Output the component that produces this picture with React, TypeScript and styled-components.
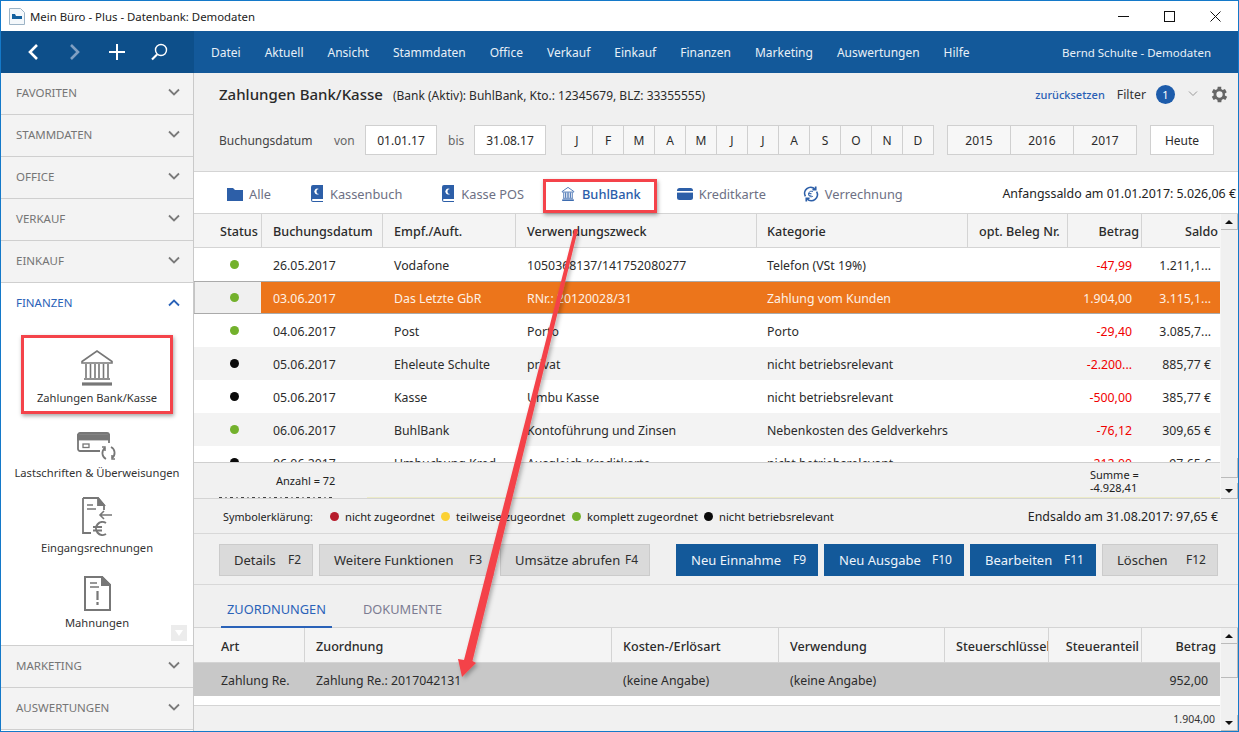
import React from 'react';
import styled, { createGlobalStyle } from 'styled-components';

const GlobalStyle = createGlobalStyle`
	html, body {
		margin: 0;
		padding: 0;
		background: #fff;
	}
	* {
		box-sizing: border-box;
	}
`;

const Window = styled.div`
	position: relative;
	width: 1239px;
	height: 732px;
	display: flex;
	flex-direction: column;
	overflow: hidden;
	border: 1px solid #1479c9;
	background: #fff;
	font-family: 'Noto Sans', 'Open Sans', sans-serif;
	font-size: 12.3px;
	color: #2b2b2b;
`;

const TitleBar = styled.div`
	height: 30px;
	flex: none;
	display: flex;
	align-items: center;
	padding-left: 8px;
	color: #222;
	font-size: 11.4px;
`;

const TitleText = styled.span`
	margin-left: 5px;
	flex: 1;
`;

const WindowControls = styled.div`
	display: flex;
	align-items: center;
	height: 100%;
`;

const WindowControl = styled.div`
	width: 46px;
	height: 100%;
	display: flex;
	align-items: center;
	justify-content: center;
`;

const NavBar = styled.div`
	height: 42px;
	flex: none;
	display: flex;
	background: #13599a;
	color: #e8f0f7;
`;

const NavTools = styled.div`
	width: 193px;
	flex: none;
	display: flex;
	align-items: center;
	padding-left: 23px;
	gap: 24px;
	background: #0d4f8a;
`;

const NavMenu = styled.nav`
	display: flex;
	align-items: center;
	gap: 24px;
	padding-left: 17px;
	flex: 1;
	font-size: 12px;
`;

const NavUser = styled.div`
	display: flex;
	align-items: center;
	padding-right: 27px;
	font-size: 11.5px;
`;

const Body = styled.div`
	flex: 1;
	display: flex;
	min-height: 0;
`;

const Sidebar = styled.aside`
	width: 193px;
	flex: none;
	display: flex;
	flex-direction: column;
	border-right: 1px solid #c9c9c9;
	background: #fff;
`;

const SectionHead = styled.div<{ $open?: boolean }>`
	height: 42px;
	flex: none;
	display: flex;
	align-items: center;
	justify-content: space-between;
	padding: 0 13px 3px 15px;
	background: ${(p) => (p.$open ? '#fff' : '#f3f3f3')};
	border-bottom: ${(p) => (p.$open ? 'none' : '1px solid #cfcfcf')};
	color: ${(p) => (p.$open ? '#2a62b8' : '#757575')};
	font-size: 11.5px;
`;

const SectionBody = styled.div`
	position: relative;
	height: 321px;
	flex: none;
	display: flex;
	flex-direction: column;
	align-items: center;
	padding-top: 8px;
	border-bottom: 1px solid #cfcfcf;
`;

const SideItem = styled.div`
	height: 75px;
	flex: none;
	display: flex;
	flex-direction: column;
	align-items: center;
	justify-content: flex-end;
	font-size: 11.2px;
	line-height: 15px;
	color: #333;
	white-space: nowrap;
	padding-bottom: 3px;
	gap: 4px;
`;

const CollapseTab = styled.div`
	position: absolute;
	right: 6px;
	bottom: 4px;
	width: 16px;
	height: 16px;
	background: #ececec;
	display: flex;
	align-items: center;
	justify-content: center;
`;

const Main = styled.main`
	flex: 1;
	min-width: 0;
	display: flex;
	flex-direction: column;
	background: #f0f0f0;
`;

const PageHead = styled.div`
	height: 99px;
	flex: none;
	display: flex;
	flex-direction: column;
	border-bottom: 1px solid #d4d4d4;
`;

const TitleRow = styled.div`
	height: 52px;
	flex: none;
	display: flex;
	align-items: center;
	padding: 0 10px 10px 25px;
`;

const PageTitle = styled.h1`
	margin: 0;
	font-size: 15px;
	font-weight: 500;
	color: #2a2a2a;
`;

const PageSub = styled.span`
	margin-left: 10px;
	margin-top: 2px;
	font-size: 12px;
	flex: 1;
`;

const ResetLink = styled.a`
	color: #2a5fb5;
	font-size: 11px;
	font-weight: 500;
`;

const FilterLabel = styled.span`
	margin-left: 12px;
	font-size: 12.3px;
	color: #333;
`;

const FilterBadge = styled.span`
	margin-left: 10px;
	width: 19px;
	height: 19px;
	border-radius: 50%;
	background: #1d5cab;
	color: #fff;
	font-size: 11px;
	display: flex;
	align-items: center;
	justify-content: center;
`;

const FilterCaret = styled.svg`
	margin: 0 6px 0 6px;
`;

const DateRow = styled.div`
	display: flex;
	align-items: center;
	padding-left: 25px;
	height: 30px;
`;

const DateLabel = styled.span<{ $w: number; $c?: string; $pl?: number }>`
	width: ${(p) => p.$w}px;
	flex: none;
	padding-left: ${(p) => p.$pl ?? 0}px;
	color: ${(p) => p.$c || '#444'};
	font-size: 12px;
`;

const DateInput = styled.div`
	width: 72px;
	height: 30px;
	flex: none;
	display: flex;
	align-items: center;
	justify-content: center;
	background: #fff;
	border: 1px solid #d0d0d0;
	font-size: 12px;
`;

const CellGroup = styled.div<{ $ml: number }>`
	display: flex;
	margin-left: ${(p) => p.$ml}px;
`;

const GroupCell = styled.div<{ $w: number; $white?: boolean }>`
	width: ${(p) => p.$w}px;
	height: 30px;
	display: flex;
	align-items: center;
	justify-content: center;
	background: ${(p) => (p.$white ? '#fff' : '#f7f7f7')};
	border: 1px solid #d0d0d0;
	margin-left: -1px;
	font-size: 12px;
`;

const TabBar = styled.div`
	height: 42px;
	flex: none;
	display: flex;
	align-items: center;
	gap: 38px;
	padding: 2px 0 0 33px;
	background: #fff;
	border-bottom: 1px solid #d4d4d4;
`;

const Tab = styled.div<{ $active?: boolean; $nudge: number }>`
	display: flex;
	align-items: center;
	gap: 6px;
	margin-left: ${(p) => p.$nudge}px;
	font-size: 12.8px;
	color: ${(p) => (p.$active ? '#2a5caa' : '#6d7084')};
	font-weight: ${(p) => (p.$active ? 500 : 400)};
`;

const OpeningBalance = styled.div`
	margin-left: auto;
	padding-right: 2px;
	font-size: 12.4px;
	color: #222;
`;

const GridArea = styled.div<{ $grow?: boolean }>`
	display: flex;
	flex: ${(p) => (p.$grow ? 1 : 'none')};
	min-height: 0;
`;

const GridColumn = styled.div`
	width: 1026px;
	flex: none;
	display: flex;
	flex-direction: column;
`;

const tableColumns = '67px 121px 133px 241px 211px 100px 74px 79px';
const subColumns = '110px 307px 167px 166px 104px 93px 79px';

const HeaderRow = styled.div<{ $cols: string; $h: number; $top: number }>`
	display: grid;
	grid-template-columns: ${(p) => p.$cols};
	height: ${(p) => p.$h}px;
	flex: none;
	background: #f4f4f4;
	border-bottom: 1px solid #d4d4d4;

	& > div {
		padding-top: ${(p) => p.$top}px;
	}
`;

const HeaderCell = styled.div<{ $pr?: number; $pad?: number }>`
	display: flex;
	align-items: center;
	justify-content: ${(p) => (p.$pr !== undefined ? 'flex-end' : 'flex-start')};
	padding-left: ${(p) => p.$pad ?? 11}px;
	padding-right: ${(p) => p.$pr ?? 0}px;
	border-left: 1px solid #d4d4d4;
	font-size: 12.6px;
	font-weight: 500;
	color: #2b2b2b;
	white-space: nowrap;
	overflow: hidden;

	&:first-child {
		border-left: none;
	}
`;

const TableBody = styled.div`
	height: 214px;
	flex: none;
	overflow: hidden;
	background: #fff;
`;

const Row = styled.div<{ $cols: string; $tone: 'white' | 'grey' | 'active' }>`
	display: grid;
	grid-template-columns: ${(p) => p.$cols};
	height: 33px;
	background: ${(p) => (p.$tone === 'grey' ? '#f3f3f3' : '#fff')};
	box-shadow: ${(p) =>
		p.$tone === 'active' ? 'inset 0 1px #aaa, inset 0 -1px #aaa' : 'none'};
`;

const StatusCell = styled.div<{ $active?: boolean }>`
	display: flex;
	align-items: center;
	justify-content: center;
	padding-left: 13px;
	margin: ${(p) => (p.$active ? '1px 0' : '0')};
	background: ${(p) => (p.$active ? '#f0f0f0' : 'transparent')};
	border: ${(p) => (p.$active ? '1px solid #c4c4c4' : 'none')};
	border-width: 0 0 0 1px;
`;

const Dot = styled.span<{ $color: string }>`
	display: inline-block;
	width: 9px;
	height: 9px;
	flex: none;
	border-radius: 50%;
	background: ${(p) => p.$color};
`;

const Cell = styled.div<{ $pr?: number; $pl?: number; $red?: boolean; $active?: boolean }>`
	display: flex;
	align-items: center;
	justify-content: ${(p) => (p.$pr !== undefined ? 'flex-end' : 'flex-start')};
	padding-left: ${(p) => (p.$pr !== undefined ? 0 : p.$pl ?? 12)}px;
	padding-right: ${(p) => p.$pr ?? 0}px;
	padding-top: 1px;
	white-space: nowrap;
	overflow: hidden;
	background: ${(p) => (p.$active ? '#ec751b' : 'transparent')};
	margin: ${(p) => (p.$active ? '1px 0' : '0')};
	color: ${(p) => (p.$active ? '#fdf1e6' : p.$red ? '#f00000' : '#2b2b2b')};
`;

const SummaryBar = styled.div`
	height: 37px;
	flex: none;
	display: flex;
	flex-direction: column;
	background: #f1f1f1;
	border-top: 1px solid #cfcfcf;
	border-bottom: 1px solid #d4d4d4;
	font-size: 11px;
	color: #222;
`;

const SummaryContent = styled.div`
	flex: 1;
	display: grid;
	grid-template-columns: 896px 130px;
`;

const SummaryCount = styled.div`
	padding-left: 82px;
	display: flex;
	align-items: center;
`;

const SummaryTotal = styled.div`
	display: flex;
	flex-direction: column;
	justify-content: center;
	line-height: 13px;
	white-space: nowrap;
	padding-top: 2px;
`;

const SummaryEdge = styled.div`
	height: 1px;
	flex: none;
	display: flex;
	padding-left: 25px;
`;

const ClippedText = styled.div`
	width: 113px;
	background: repeating-linear-gradient(to right, #444 0 3px, transparent 3px 6px, #888 6px 8px, transparent 8px 11px);
`;

const YellowLine = styled.div`
	flex: 1;
	margin-left: 35px;
	background: #ecebc8;
`;

const Scrollbar = styled.div`
	width: 18px;
	flex: none;
	display: flex;
	flex-direction: column;
	background: #f0f0f0;
	border-left: 1px solid #f6f6f6;
`;

const ScrollButton = styled.div`
	height: 16px;
	flex: none;
	display: flex;
	align-items: center;
	justify-content: center;
	background: #f0f0f0;
	border-right: 1px solid #bbb;
	border-bottom: 1px solid #bbb;
`;

const ScrollTrack = styled.div`
	flex: 1;
	display: flex;
	flex-direction: column;
`;

const ScrollThumb = styled.div<{ $h: number; $mt: number }>`
	height: ${(p) => p.$h}px;
	margin-top: ${(p) => p.$mt}px;
	flex: none;
	background: #f0f0f0;
	border-right: 1px solid #bbb;
	border-bottom: 1px solid #bbb;
`;

const Arrow = styled.span<{ $up?: boolean }>`
	width: 0;
	height: 0;
	border-left: 4px solid transparent;
	border-right: 4px solid transparent;
	${(p) => (p.$up ? 'border-bottom: 4px solid #111;' : 'border-top: 4px solid #111;')}
`;

const LegendBar = styled.div`
	height: 35px;
	flex: none;
	display: flex;
	align-items: center;
	padding: 0 20px 0 29px;
	border-bottom: 1px solid #d8d8d8;
	font-size: 11.2px;
	color: #222;
`;

const LegendTitle = styled.span`
	width: 107px;
	flex: none;
	font-size: 10.8px;
`;

const LegendItem = styled.span<{ $w: number }>`
	width: ${(p) => p.$w}px;
	flex: none;
	display: flex;
	align-items: center;
	gap: 6px;
	white-space: nowrap;
`;

const LegendEnd = styled.span`
	margin-left: auto;
	font-size: 12.4px;
`;

const ActionBar = styled.div`
	height: 51px;
	flex: none;
	display: flex;
	align-items: center;
	padding: 1px 0 0 25px;
	gap: 6px;
	border-bottom: 1px solid #d8d8d8;
`;

const ActionButton = styled.button<{ $w: number; $primary?: boolean; $ml?: number }>`
	width: ${(p) => p.$w}px;
	height: 32px;
	margin-left: ${(p) => p.$ml ?? 0}px;
	display: flex;
	align-items: center;
	justify-content: space-between;
	padding: 0 11px 0 14px;
	font: inherit;
	font-size: 13px;
	border: 1px solid ${(p) => (p.$primary ? '#13599a' : '#cbcbcb')};
	background: ${(p) => (p.$primary ? '#13599a' : '#dadada')};
	color: ${(p) => (p.$primary ? '#eef4fa' : '#2e2e2e')};
`;

const ButtonKey = styled.span`
	font-size: 12px;
`;

const SubTabs = styled.div`
	height: 43px;
	flex: none;
	display: flex;
	align-items: flex-end;
	padding-left: 27px;
	gap: 25px;
	border-bottom: 1px solid #d4d4d4;
`;

const SubTab = styled.div<{ $active?: boolean }>`
	height: 32px;
	padding: 4px 6px 0;
	font-size: 12.8px;
	color: ${(p) => (p.$active ? '#2a62b8' : '#7c7c92')};
	border-bottom: 2px solid ${(p) => (p.$active ? '#2a62b8' : 'transparent')};
	margin-bottom: -1px;
`;

const SubBody = styled.div`
	height: 43px;
	flex: none;
	background: #fff;
	border-bottom: 1px solid #d4d4d4;
`;

const SubRow = styled.div<{ $cols: string }>`
	display: grid;
	grid-template-columns: ${(p) => p.$cols};
	height: 33px;
	background: #c8c8c8;
`;

const SubFooter = styled.div`
	flex: 1;
	display: flex;
	align-items: center;
	justify-content: flex-end;
	padding: 0 5px 0 0;
	font-size: 10.5px;
	color: #333;
	background: #f1f1f1;
`;

const Highlight = styled.div<{ $x: number; $y: number; $w: number; $h: number }>`
	position: absolute;
	left: ${(p) => p.$x}px;
	top: ${(p) => p.$y}px;
	width: ${(p) => p.$w}px;
	height: ${(p) => p.$h}px;
	border: 3px solid #f4434a;
	box-shadow: 1px 2px 4px rgba(0, 0, 0, 0.35);
	pointer-events: none;
`;

const PointerOverlay = styled.svg`
	position: absolute;
	left: -1px;
	top: -1px;
	pointer-events: none;
`;

const Chevron = ({ up, color = '#7a7a7a' }: { up?: boolean; color?: string }) => (
	<svg width='12' height='8' viewBox='0 0 12 8'>
		<path
			d={up ? 'M1 6.5 6 1.5l5 5' : 'M1 1.5 6 6.5l5-5'}
			fill='none'
			stroke={color}
			strokeWidth='1.8'
		/>
	</svg>
);

const BankIcon = ({ w, h, color, stroke }: { w: number; h: number; color: string; stroke: number }) => (
	<svg width={w} height={h} viewBox='0 0 32 36' fill='none' stroke={color} strokeWidth={stroke}>
		<path d='M1 11.500 16 1l15 10.500v1.500H1z' />
		<path d='M5 14v14M9.500 14v14M14 14v14M18 14v14M22.500 14v14M27 14v14' />
		<path d='M3 29h26' />
		<path d='M1 34h30' strokeWidth={stroke * 2} />
	</svg>
);

const BookIcon = () => (
	<svg width='15' height='17' viewBox='-1 0 15 17'>
		<path d='M1 2a2 2 0 0 1 2-2h10v14H3a1 1 0 0 0 0 2h10v1H3a2 2 0 0 1-2-2z' fill='#2d5fa8' />
		<path d='M9 4a3 3 0 1 0 0 5 2.500 2.500 0 0 1 0-5z' fill='#fff' />
	</svg>
);

const TabIcons: Record<string, React.ReactNode> = {
	Alle: (
		<svg width='16' height='14' viewBox='0 0 16 14'>
			<path d='M0 1h6l2 2h8v11H0z' fill='#2d5fa8' />
		</svg>
	),
	Kassenbuch: <BookIcon />,
	'Kasse POS': <BookIcon />,
	BuhlBank: <BankIcon w={16} h={14} color='#3d6cb0' stroke={2.2} />,
	Kreditkarte: (
		<svg width='16' height='12' viewBox='0 0 16 12'>
			<rect y='0' width='16' height='12' rx='2.500' fill='#2d5fa8' />
			<rect y='3' width='16' height='1.600' fill='#fff' />
		</svg>
	),
	Verrechnung: (
		<svg width='16' height='16' viewBox='0 0 17 17' fill='none' stroke='#2d5fa8' strokeWidth='1.800'>
			<path d='M2.500 11A6.500 6.500 0 0 1 12.500 3M14.500 6a6.500 6.500 0 0 1-10 8' />
			<path d='M13.500 .5v3.500h-3.500M3.500 16.500v-3.500h3.500' />
			<path d='M10.500 6a3 3 0 1 0 0 5M6 8h3M6 9.800h3' strokeWidth='1' />
		</svg>
	),
};

const sections = ['FAVORITEN', 'STAMMDATEN', 'OFFICE', 'VERKAUF', 'EINKAUF'];
const menu = [
	'Datei',
	'Aktuell',
	'Ansicht',
	'Stammdaten',
	'Office',
	'Verkauf',
	'Einkauf',
	'Finanzen',
	'Marketing',
	'Auswertungen',
	'Hilfe',
];
const months = ['J', 'F', 'M', 'A', 'M', 'J', 'J', 'A', 'S', 'O', 'N', 'D'];
const tabs = [
	{ label: 'Alle', nudge: 0 },
	{ label: 'Kassenbuch', nudge: 0 },
	{ label: 'Kasse POS', nudge: 0 },
	{ label: 'BuhlBank', nudge: -2 },
	{ label: 'Kreditkarte', nudge: -2 },
	{ label: 'Verrechnung', nudge: -1 },
];

const GREEN = '#73b12c';
const BLACK = '#0a0a0a';

const rows = [
	{ dot: GREEN, date: '26.05.2017', who: 'Vodafone', why: '1050368137/141752080277', cat: 'Telefon (VSt 19%)', amount: '-47,99', saldo: '1.211,1...' },
	{ dot: GREEN, date: '03.06.2017', who: 'Das Letzte GbR', why: 'RNr.: 20120028/31', cat: 'Zahlung vom Kunden', amount: '1.904,00', saldo: '3.115,1...' },
	{ dot: GREEN, date: '04.06.2017', who: 'Post', why: 'Porto', cat: 'Porto', amount: '-29,40', saldo: '3.085,7...' },
	{ dot: BLACK, date: '05.06.2017', who: 'Eheleute Schulte', why: 'privat', cat: 'nicht betriebsrelevant', amount: '-2.200...', saldo: '885,77 €' },
	{ dot: BLACK, date: '05.06.2017', who: 'Kasse', why: 'Umbu Kasse', cat: 'nicht betriebsrelevant', amount: '-500,00', saldo: '385,77 €' },
	{ dot: GREEN, date: '06.06.2017', who: 'BuhlBank', why: 'Kontoführung und Zinsen', cat: 'Nebenkosten des Geldverkehrs', amount: '-76,12', saldo: '309,65 €' },
	{ dot: BLACK, date: '06.06.2017', who: 'Umbuchung Kred...', why: 'Ausgleich Kreditkarte', cat: 'nicht betriebsrelevant', amount: '-212,00', saldo: '97,65 €' },
];

const toneFor = (index: number): 'white' | 'grey' | 'active' => {
	if (index === 1) return 'active';
	return index === 3 || index === 5 ? 'grey' : 'white';
};

export default function App() {
	return (
		<Window>
			<GlobalStyle />
			<TitleBar>
				<svg width='16' height='17' viewBox='0 0 16 17'>
					<path d='M.5.5h11l4 4v12H.5z' fill='#f4f8fb' stroke='#9db4c6' />
					<path d='M3 6h3l1 2h6v3H3z' fill='#14619f' />
				</svg>
				<TitleText>Mein Büro - Plus - Datenbank: Demodaten</TitleText>
				<WindowControls>
					<WindowControl>
						<svg width='11' height='11' viewBox='0 0 11 11'>
							<path d='M0 5.500h11' stroke='#111' />
						</svg>
					</WindowControl>
					<WindowControl>
						<svg width='11' height='11' viewBox='0 0 11 11'>
							<rect x='.5' y='.5' width='10' height='10' fill='none' stroke='#111' />
						</svg>
					</WindowControl>
					<WindowControl>
						<svg width='11' height='11' viewBox='0 0 11 11'>
							<path d='M.5.5l10 10M10.500.5l-10 10' stroke='#111' />
						</svg>
					</WindowControl>
				</WindowControls>
			</TitleBar>

			<NavBar>
				<NavTools>
					<svg width='18' height='18' viewBox='0 0 18 18'>
						<path d='M13 2 6 9l7 7' fill='none' stroke='#fff' strokeWidth='2.600' />
					</svg>
					<svg width='18' height='18' viewBox='0 0 18 18'>
						<path d='M5 2l7 7-7 7' fill='none' stroke='#7f9fc2' strokeWidth='2.600' />
					</svg>
					<svg width='18' height='18' viewBox='0 0 18 18'>
						<path d='M9 1v16M1 9h16' stroke='#fff' strokeWidth='2' />
					</svg>
					<svg width='18' height='18' viewBox='0 0 18 18' fill='none' stroke='#fff' strokeWidth='1.400'>
						<circle cx='11' cy='7' r='5.500' />
						<path d='M7 11.500 2 16.500' strokeWidth='2.200' />
					</svg>
				</NavTools>
				<NavMenu>
					{menu.map((item) => (
						<span key={item}>{item}</span>
					))}
				</NavMenu>
				<NavUser>Bernd Schulte - Demodaten</NavUser>
			</NavBar>

			<Body>
				<Sidebar>
					{sections.map((section) => (
						<SectionHead key={section}>
							{section}
							<Chevron />
						</SectionHead>
					))}
					<SectionHead $open>
						FINANZEN
						<Chevron up color='#2a62b8' />
					</SectionHead>
					<SectionBody>
						<SideItem>
							<BankIcon w={32} h={36} color='#777' stroke={1.6} />
							Zahlungen Bank/Kasse
						</SideItem>
						<SideItem>
							<svg width='39' height='29' viewBox='0 0 39 29' fill='none' stroke='#777' strokeWidth='1.800'>
								<path d='M23 19H3a2 2 0 0 1-2-2V3a2 2 0 0 1 2-2h27a2 2 0 0 1 2 2v8' />
								<rect x='1' y='3' width='31' height='4.500' fill='#777' />
								<rect x='6' y='12' width='6' height='3.500' strokeWidth='1.300' />
								<path d='M29 27a6.500 6.500 0 0 1-1-11M34 15a6.500 6.500 0 0 1 1 11' />
								<path d='M28 19v-4h-3M35 23v4h3' strokeWidth='1.500' />
							</svg>
							Lastschriften & Überweisungen
						</SideItem>
						<SideItem>
							<svg width='30' height='39' viewBox='0 0 30 39' fill='none' stroke='#777' strokeWidth='1.800'>
								<path d='M1 1h15l6 7v5M1 1v35h8' />
								<path d='M16 1l6 7h-6z' fill='#777' />
								<path d='M5 8h6M5 12h9' strokeWidth='1.400' />
								<path d='M30 18H18M22 14l-4 4 4 4' strokeWidth='1.600' />
								<path d='M24 26a6.500 6.500 0 1 0 0 11M11 30h9M11 33.500h9' strokeWidth='2' />
							</svg>
							Eingangsrechnungen
						</SideItem>
						<SideItem>
							<svg width='27' height='35' viewBox='0 0 27 35' fill='none' stroke='#777' strokeWidth='2'>
								<path d='M1 1h17l8 8v25H1z' />
								<path d='M18 1v8h8z' fill='#777' />
								<path d='M6 7h7M6 11h9' strokeWidth='1.300' />
								<path d='M13.500 15v9M13.500 26v3' strokeWidth='2.200' />
							</svg>
							Mahnungen
						</SideItem>
						<CollapseTab>
							<svg width='8' height='6' viewBox='0 0 8 6'>
								<path d='M0 0h8L4 6z' fill='#fff' />
							</svg>
						</CollapseTab>
					</SectionBody>
					<SectionHead>
						MARKETING
						<Chevron />
					</SectionHead>
					<SectionHead>
						AUSWERTUNGEN
						<Chevron />
					</SectionHead>
				</Sidebar>

				<Main>
					<PageHead>
						<TitleRow>
							<PageTitle>Zahlungen Bank/Kasse</PageTitle>
							<PageSub>(Bank (Aktiv): BuhlBank, Kto.: 12345679, BLZ: 33355555)</PageSub>
							<ResetLink>zurücksetzen</ResetLink>
							<FilterLabel>Filter</FilterLabel>
							<FilterBadge>1</FilterBadge>
							<FilterCaret width='24' height='8' viewBox='0 0 24 8'>
								<path d='M8 1.500l4 4 4-4' fill='none' stroke='#999' />
							</FilterCaret>
							<svg width='17' height='17' viewBox='3.900 2.500 19 19' fill='#666'>
								<path d='M19.400 13a7.600 7.600 0 0 0 0-2l2.100-1.600-2-3.500-2.500 1a7.500 7.500 0 0 0-1.700-1L15.400 3.300h-4l-.4 2.600a7.500 7.500 0 0 0-1.700 1l-2.500-1-2 3.500L6.900 11a7.600 7.600 0 0 0 0 2l-2.100 1.600 2 3.500 2.500-1a7.500 7.500 0 0 0 1.700 1l.4 2.600h4l.4-2.600a7.500 7.500 0 0 0 1.700-1l2.500 1 2-3.500zM13.400 15.500a3.500 3.500 0 1 1 0-7 3.500 3.500 0 0 1 0 7z' />
							</svg>
						</TitleRow>
						<DateRow>
							<DateLabel $w={115}>Buchungsdatum</DateLabel>
							<DateLabel $w={31} $c='#666'>
								von
							</DateLabel>
							<DateInput>01.01.17</DateInput>
							<DateLabel $w={37} $pl={11} $c='#666'>
								bis
							</DateLabel>
							<DateInput>31.08.17</DateInput>
							<CellGroup $ml={16}>
								{months.map((m, i) => (
									<GroupCell key={i} $w={32}>
										{m}
									</GroupCell>
								))}
							</CellGroup>
							<CellGroup $ml={14}>
								{['2015', '2016', '2017'].map((y) => (
									<GroupCell key={y} $w={64}>
										{y}
									</GroupCell>
								))}
							</CellGroup>
							<CellGroup $ml={14}>
								<GroupCell $w={64} $white>
									Heute
								</GroupCell>
							</CellGroup>
						</DateRow>
					</PageHead>

					<TabBar>
						{tabs.map((tab) => (
							<Tab key={tab.label} $active={tab.label === 'BuhlBank'} $nudge={tab.nudge}>
								{TabIcons[tab.label]}
								{tab.label}
							</Tab>
						))}
						<OpeningBalance>Anfangssaldo am 01.01.2017: 5.026,06 €</OpeningBalance>
					</TabBar>

					<GridArea>
						<GridColumn>
							<HeaderRow $cols={tableColumns} $h={34} $top={1}>
								<HeaderCell $pad={26}>Status</HeaderCell>
								<HeaderCell>Buchungsdatum</HeaderCell>
								<HeaderCell>Empf./Auft.</HeaderCell>
								<HeaderCell>Verwendungszweck</HeaderCell>
								<HeaderCell $pad={10}>Kategorie</HeaderCell>
								<HeaderCell>opt. Beleg Nr.</HeaderCell>
								<HeaderCell $pr={2}>Betrag</HeaderCell>
								<HeaderCell $pr={2}>Saldo</HeaderCell>
							</HeaderRow>
							<TableBody>
								{rows.map((row, index) => {
									const tone = toneFor(index);
									const active = tone === 'active';
									return (
										<Row key={index} $cols={tableColumns} $tone={tone}>
											<StatusCell $active={active}>
												<Dot $color={row.dot} />
											</StatusCell>
											<Cell $active={active}>{row.date}</Cell>
											<Cell $active={active}>{row.who}</Cell>
											<Cell $active={active}>{row.why}</Cell>
											<Cell $active={active} $pl={11}>
												{row.cat}
											</Cell>
											<Cell $active={active} />
											<Cell $active={active} $pr={9} $red>
												{row.amount}
											</Cell>
											<Cell $active={active} $pr={9}>
												{row.saldo}
											</Cell>
										</Row>
									);
								})}
							</TableBody>
							<SummaryBar>
								<SummaryContent>
									<SummaryCount>Anzahl = 72</SummaryCount>
									<SummaryTotal>
										<span>Summe =</span>
										<span>-4.928,41</span>
									</SummaryTotal>
								</SummaryContent>
								<SummaryEdge>
									<ClippedText />
									<YellowLine />
								</SummaryEdge>
							</SummaryBar>
						</GridColumn>
						<Scrollbar>
							<ScrollButton>
								<Arrow $up />
							</ScrollButton>
							<ScrollTrack>
								<ScrollThumb $h={20} $mt={228} />
							</ScrollTrack>
							<ScrollButton>
								<Arrow />
							</ScrollButton>
						</Scrollbar>
					</GridArea>

					<LegendBar>
						<LegendTitle>Symbolerklärung:</LegendTitle>
						<LegendItem $w={111}>
							<Dot $color='#b71c2c' />
							nicht zugeordnet
						</LegendItem>
						<LegendItem $w={131}>
							<Dot $color='#fbd134' />
							teilweise zugeordnet
						</LegendItem>
						<LegendItem $w={132}>
							<Dot $color={GREEN} />
							komplett zugeordnet
						</LegendItem>
						<LegendItem $w={130}>
							<Dot $color={BLACK} />
							nicht betriebsrelevant
						</LegendItem>
						<LegendEnd>Endsaldo am 31.08.2017: 97,65 €</LegendEnd>
					</LegendBar>

					<ActionBar>
						<ActionButton $w={94}>
							Details <ButtonKey>F2</ButtonKey>
						</ActionButton>
						<ActionButton $w={175}>
							Weitere Funktionen <ButtonKey>F3</ButtonKey>
						</ActionButton>
						<ActionButton $w={150}>
							Umsätze abrufen <ButtonKey>F4</ButtonKey>
						</ActionButton>
						<ActionButton $w={142} $primary $ml={20}>
							Neu Einnahme <ButtonKey>F9</ButtonKey>
						</ActionButton>
						<ActionButton $w={140} $primary>
							Neu Ausgabe <ButtonKey>F10</ButtonKey>
						</ActionButton>
						<ActionButton $w={126} $primary>
							Bearbeiten <ButtonKey>F11</ButtonKey>
						</ActionButton>
						<ActionButton $w={116}>
							Löschen <ButtonKey>F12</ButtonKey>
						</ActionButton>
					</ActionBar>

					<SubTabs>
						<SubTab $active>ZUORDNUNGEN</SubTab>
						<SubTab>DOKUMENTE</SubTab>
					</SubTabs>

					<GridArea $grow>
						<GridColumn>
							<HeaderRow $cols={subColumns} $h={35} $top={3}>
								<HeaderCell $pad={27}>Art</HeaderCell>
								<HeaderCell>Zuordnung</HeaderCell>
								<HeaderCell>Kosten-/Erlösart</HeaderCell>
								<HeaderCell>Verwendung</HeaderCell>
								<HeaderCell>Steuerschlüssel</HeaderCell>
								<HeaderCell $pr={2}>Steueranteil</HeaderCell>
								<HeaderCell $pr={4}>Betrag</HeaderCell>
							</HeaderRow>
							<SubBody>
								<SubRow $cols={subColumns}>
									<Cell $pl={27}>Zahlung Re.</Cell>
									<Cell>Zahlung Re.: 2017042131</Cell>
									<Cell>(keine Angabe)</Cell>
									<Cell>(keine Angabe)</Cell>
									<Cell />
									<Cell />
									<Cell $pr={12}>952,00</Cell>
								</SubRow>
							</SubBody>
							<SubFooter>1.904,00</SubFooter>
						</GridColumn>
						<Scrollbar>
							<ScrollButton>
								<Arrow $up />
							</ScrollButton>
							<ScrollTrack>
								<ScrollThumb $h={34} $mt={0} />
							</ScrollTrack>
							<ScrollButton>
								<Arrow />
							</ScrollButton>
						</Scrollbar>
					</GridArea>
				</Main>
			</Body>

			<Highlight $x={20} $y={334} $w={152} $h={79} />
			<Highlight $x={542} $y={178} $w={114} $h={34} />
			<PointerOverlay width='1239' height='732' viewBox='0 0 1239 732'>
				<defs>
					<filter id='pointerShadow' x='-20%' y='-5%' width='140%' height='110%'>
						<feDropShadow dx='2' dy='2' stdDeviation='2' floodColor='#000' floodOpacity='0.3' />
					</filter>
				</defs>
				<path
					d='M574.500 229 L578 229.500 L472.500 661 L476 663 L462 677 L458 659 L464 660 Z'
					fill='#f4434a'
					filter='url(#pointerShadow)'
				/>
			</PointerOverlay>
		</Window>
	);
}
